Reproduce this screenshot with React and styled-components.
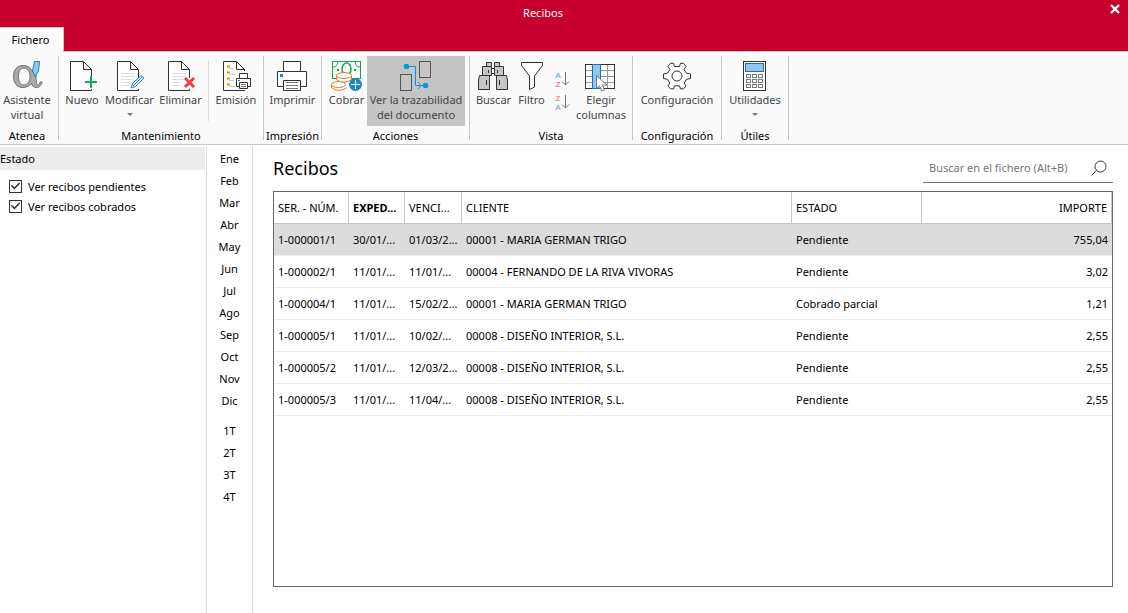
import React, { useState } from 'react'
import styled, { createGlobalStyle } from 'styled-components';

const receipts = [
    { id: '1-000001/1', issued: '30/01/...', due: '01/03/2...', client: '00001 - MARIA GERMAN TRIGO', status: 'Pendiente', amount: '755,04' },
    { id: '1-000002/1', issued: '11/01/...', due: '11/01/...', client: '00004 - FERNANDO DE LA RIVA VIVORAS', status: 'Pendiente', amount: '3,02' },
    { id: '1-000004/1', issued: '11/01/...', due: '15/02/2...', client: '00001 - MARIA GERMAN TRIGO', status: 'Cobrado parcial', amount: '1,21' },
    { id: '1-000005/1', issued: '11/01/...', due: '10/02/...', client: '00008 - DISEÑO INTERIOR, S.L.', status: 'Pendiente', amount: '2,55' },
    { id: '1-000005/2', issued: '11/01/...', due: '12/03/2...', client: '00008 - DISEÑO INTERIOR, S.L.', status: 'Pendiente', amount: '2,55' },
    { id: '1-000005/3', issued: '11/01/...', due: '11/04/...', client: '00008 - DISEÑO INTERIOR, S.L.', status: 'Pendiente', amount: '2,55' },
]

const months = ['Ene', 'Feb', 'Mar', 'Abr', 'May', 'Jun', 'Jul', 'Ago', 'Sep', 'Oct', 'Nov', 'Dic']
const quarters = ['1T', '2T', '3T', '4T']

function Sheet({ lines, children }) {
    return (
        <Icon viewBox="0 0 32 32">
            <path d="M26 18V10L17.5 1.5H4.5V30.5H25.5V28" fill="#fff" stroke="none" />
            <path d="M25.5 18V9.5L17.5 1.5H4.5V30.5H25.5V29M17.5 1.5V9.5H25.5" stroke="#333" />
            {lines && <path d="M8 13.5H22M8 16.5H22M8 19.5H20M8 22.5H18M8 25.5H17" stroke="#ddd" />}
            {children}
        </Icon>
    )
}

function AlphaIcon() {
    return (
        <Icon viewBox="0 0 32 32">
            <path
                d="M12 5.5C17 5.5 20 8 21.5 12L23 8L25 15C25 22 26 25 27 25C28.5 25 29 23.5 29 22L31 22C30.5 26 28 27.5 25.5 27.5C22.5 27.5 21 26 20.5 23C18.5 26 15.5 27.5 12 27.5C6 27.5 2.5 23 2.5 16.5C2.5 10 6 5.5 12 5.5ZM13 8C9 8 7.5 11.5 7.5 16.5C7.5 21.5 9 25 13 25C17 25 19 20.5 19 16.5C19 12 17 8 13 8Z"
                fill="#aaa"
                fillRule="evenodd"
                stroke="#6f6f6f"
            />
            <path d="M23.5 1.5H28.5L27.5 11L24 17L21.5 11Z" fill="#8dc8f0" stroke="#2779b5" />
        </Icon>
    )
}

function EmitIcon() {
    return (
        <Icon viewBox="0 0 32 32">
            <path d="M25 30.5H3.5V1.5H16.5L24.5 9.5V11" fill="#fff" stroke="#333" />
            <path d="M16.5 1.5V9.5H24.5" stroke="#333" />
            <path d="M7 6.5H10M7 12.5H10M7 18.5H10M7 24.5H10" stroke="#f39200" strokeWidth="2" />
            <path d="M9 8.5H14M9 14.5H15M9 20.5H14M9 26.5H15" stroke="#ccc" />
            <path d="M19.5 18V13.5H27.5V18" fill="#fff" stroke="#333" />
            <path d="M16.5 18.5H30.5V26.5H16.5Z" fill="#fff" stroke="#333" />
            <path d="M19.5 22.5H27.5V28.5H19.5Z" fill="#fff" stroke="#333" />
            <path d="M21 24.5H26M21 26.5H26" stroke="#777" />
            <path d="M18 20.5H20" stroke="#1e88c8" />
        </Icon>
    )
}

function PrinterIcon() {
    return (
        <Icon viewBox="0 0 32 32">
            <path d="M7.5 11V1.5H24.5V11" fill="#fff" stroke="#333" />
            <path d="M1.5 11.5H30.5V26.5H1.5Z" fill="#fff" stroke="#333" />
            <path d="M7.5 20.5H24.5V30.5H7.5Z" fill="#fff" stroke="#333" />
            <path d="M10 22.5H22M10 25.5H22M10 28.5H22" stroke="#777" />
            <rect x="4" y="14" width="3" height="3" fill="#1e88c8" />
        </Icon>
    )
}

function CashIcon() {
    return (
        <Icon viewBox="-1 0 32 32">
            <rect x="1.5" y="1.5" width="28" height="17" fill="#fff" stroke="#17a34a" />
            <path d="M2 7Q6 7 7 2M24 2Q25 7 29 7" stroke="#17a34a" />
            <ellipse cx="15.5" cy="9" rx="4.5" ry="6" stroke="#17a34a" strokeWidth="1.5" />
            <path d="M6 10H8M23 10H25" stroke="#17a34a" strokeWidth="2" />
            <g fill="#fff" stroke="#e9762b">
                <path d="M5.5 15.5V26Q12.5 32 20.5 26V15.5Z" stroke="none" />
                <path d="M0.5 24V27.5Q7 33 15.5 28" />
                <ellipse cx="7.5" cy="24.5" rx="7" ry="3" />
                <path d="M5.5 15.5V19.5Q12.5 25 20.5 19.5V15.5" />
                <ellipse cx="13" cy="15.5" rx="7.5" ry="3" />
            </g>
            <circle cx="24.5" cy="24.5" r="6.5" fill="#1e88c8" />
            <path d="M24.5 20V29M20 24.5H29" stroke="#fff" />
        </Icon>
    )
}

function TraceIcon() {
    return (
        <Icon viewBox="0 0 32 32">
            <rect x="0.5" y="14.5" width="11" height="16" stroke="#555" />
            <rect x="19.5" y="1.5" width="11" height="16" stroke="#555" />
            <path d="M7 6.5H15.5V25.5H25M18 22L21 25.5L18 29" stroke="#0a96dc" />
            <circle cx="6.5" cy="6.5" r="2.8" fill="#0a96dc" />
            <circle cx="25.5" cy="25.5" r="2.8" fill="#0a96dc" />
        </Icon>
    )
}

function BinocularsIcon() {
    return (
        <Icon viewBox="0 0 32 32">
            <g fill="#c6c6c6" stroke="#333">
                <path d="M9.5 2.5H14.5V6.5H9.5ZM17.5 2.5H22.5V6.5H17.5Z" />
                <path d="M14.5 8.5H17.5V13.5H14.5Z" fill="#fff" />
                <path d="M5.5 6.5H14.5V15.5H5.5ZM17.5 6.5H26.5V15.5H17.5Z" />
                <path d="M2.5 15.5H12.5V29.5H1.5V20ZM19.5 15.5H29.5L30.5 20V29.5H19.5Z" />
            </g>
            <path d="M9.5 20V25M22.5 20V25M11.5 10V13M20.5 10V13" stroke="#333" />
        </Icon>
    )
}

function FilterIcon() {
    return (
        <Icon viewBox="-1 0 32 32">
            <path d="M5.5 2.5H26.5V5.5L18.5 16V27L13.5 29.5V16L5.5 5.5Z" fill="#fff" stroke="#333" />
        </Icon>
    )
}

function SortIcon({ reverse }) {
    return (
        <SmallIcon viewBox="0 0 16 20">
            <text x="4" y="9" fill={reverse ? '#ef5f62' : '#4ba3d8'}>{reverse ? 'Z' : 'A'}</text>
            <text x="4" y="18" fill={reverse ? '#4ba3d8' : '#ef5f62'}>{reverse ? 'A' : 'Z'}</text>
            <path d="M11.5 3V16M8 12.5L11.5 16L15 12.5" stroke="#777" />
        </SmallIcon>
    )
}

function ColumnsIcon() {
    return (
        <Icon viewBox="0 0 32 32">
            <rect x="0.5" y="4.5" width="29" height="24" fill="#fff" stroke="none" />
            <path d="M0 10.5H30M0 16.5H30M0 22.5H30M22.5 4V28" stroke="#999" />
            <rect x="0.5" y="4.5" width="29" height="24" stroke="#333" />
            <rect x="7.5" y="4.5" width="8" height="24" fill="#8ec8ef" stroke="#1e6fb0" />
            <path d="M11.5 15.5V28.5L14.5 26L17 31L19.5 30L17.5 25H22Z" fill="#fff" stroke="#777" />
        </Icon>
    )
}

function GearIcon() {
    return (
        <Icon viewBox="0 0 32 32">
            <path d="M9.2 3.5L12.5 3.2L13.5 6.5H18.5L19.5 3.2L22.8 3.5L25 6.5L23 9.5L25.5 13.2L29.5 14V18.5L25.5 19.3L23.2 23L25 26L22.5 28.8L19.5 29L18.5 25.8H13.5L12.5 29L9.5 28.8L7 26L8.8 23L6.5 19.3L2.5 18.5V14L6.5 13.2L9 9.5L7 6.5Z" fill="#fff" stroke="#333" />
            <circle cx="16" cy="16" r="5" stroke="#333" />
        </Icon>
    )
}

function CalculatorIcon() {
    return (
        <Icon viewBox="0 0 32 32">
            <rect x="4.5" y="1.5" width="22" height="29" fill="#fff" stroke="#333" />
            <rect x="6.5" y="3.5" width="18" height="8" fill="#8ec8ef" stroke="#1e6fb0" />
            {[14.5, 19.5, 24.5].map((y) => [7.5, 13.5, 19.5].map((x) => (
                <rect key={`${x}-${y}`} x={x} y={y} width="4" height="3" stroke="#777" />
            )))}
        </Icon>
    )
}

function Tool({ label, width, icon, active, arrow }) {
    return (
        <ToolButton type="button" $width={width} $active={active}>
            {icon}
            <span>{label}</span>
            {arrow && <Arrow />}
        </ToolButton>
    )
}

function Ribbon() {
    return (
        <RibbonBar>
            <Group $flush>
                <Tools><Tool label="Asistente virtual" width={54} icon={<AlphaIcon />} /></Tools>
                <GroupName>Atenea</GroupName>
            </Group>
            <Group>
                <Tools>
                    <Tool label="Nuevo" width={38} icon={<Sheet><path d="M25 16V28M19 22H31" stroke="#17a852" strokeWidth="2" /></Sheet>} />
                    <Tool label="Modificar" width={57} arrow icon={
                        <Sheet lines>
                            <path d="M18 28L19.5 23.5L28 15.5L31 18L22.5 26.5Z" fill="#e2f2fc" stroke="#2a86c8" />
                            <path d="M20 26L29 17" stroke="#2a86c8" />
                        </Sheet>
                    } />
                    <Tool label="Eliminar" width={45} icon={
                        <Sheet lines><path d="M21 18L30 27M30 18L21 27" stroke="#ef3e3e" strokeWidth="3" /></Sheet>
                    } />
                    <Separator />
                    <Tool label="Emisión" width={46} icon={<EmitIcon />} />
                </Tools>
                <GroupName>Mantenimiento</GroupName>
            </Group>
            <Group>
                <Tools><Tool label="Imprimir" width={49} icon={<PrinterIcon />} /></Tools>
                <GroupName>Impresión</GroupName>
            </Group>
            <Group>
                <Tools>
                    <Tool label="Cobrar" width={41} icon={<CashIcon />} />
                    <Tool label="Ver la trazabilidad del documento" width={98} active icon={<TraceIcon />} />
                </Tools>
                <GroupName>Acciones</GroupName>
            </Group>
            <Group>
                <Tools>
                    <Tool label="Buscar" width={39} icon={<BinocularsIcon />} />
                    <Tool label="Filtro" width={37} icon={<FilterIcon />} />
                    <SortTools>
                        <SortButton type="button" aria-label="Orden ascendente"><SortIcon /></SortButton>
                        <SortButton type="button" aria-label="Orden descendente"><SortIcon reverse /></SortButton>
                    </SortTools>
                    <Tool label="Elegir columnas" width={54} icon={<ColumnsIcon />} />
                </Tools>
                <GroupName>Vista</GroupName>
            </Group>
            <Group>
                <Tools><Tool label="Configuración" width={80} icon={<GearIcon />} /></Tools>
                <GroupName>Configuración</GroupName>
            </Group>
            <Group>
                <Tools><Tool label="Utilidades" width={58} arrow icon={<CalculatorIcon />} /></Tools>
                <GroupName>Útiles</GroupName>
            </Group>
        </RibbonBar>
    )
}

function App() {
    const [pending, setPending] = useState(true)
    const [paid, setPaid] = useState(true)

    return (
        <Window>
            <GlobalStyle />
            <Header>
                <TitleBar>
                    <Title>Recibos</Title>
                    <CloseButton type="button" aria-label="Cerrar">
                        <svg width="10" height="10" viewBox="0 0 10 10">
                            <path d="M1 1L9 9M9 1L1 9" stroke="#fff" strokeWidth="2.4" />
                        </svg>
                    </CloseButton>
                </TitleBar>
                <Tab type="button">Fichero</Tab>
            </Header>
            <Ribbon />
            <Body>
                <Filters>
                    <FiltersTitle>Estado</FiltersTitle>
                    <Check>
                        <input type="checkbox" checked={pending} onChange={() => setPending(!pending)} />
                        Ver recibos pendientes
                    </Check>
                    <Check>
                        <input type="checkbox" checked={paid} onChange={() => setPaid(!paid)} />
                        Ver recibos cobrados
                    </Check>
                </Filters>
                <Periods>
                    <PeriodList>
                        {months.map((m) => <Period type="button" key={m}>{m}</Period>)}
                    </PeriodList>
                    <PeriodList>
                        {quarters.map((q) => <Period type="button" key={q}>{q}</Period>)}
                    </PeriodList>
                </Periods>
                <Main>
                    <MainTop>
                        <Heading>Recibos</Heading>
                        <Search>
                            <input type="text" aria-label="Buscar en el fichero" placeholder="Buscar en el fichero (Alt+B)" />
                            <svg width="16" height="16" viewBox="0 0 16 16" fill="none" stroke="#333">
                                <circle cx="9.5" cy="6.5" r="5.5" />
                                <path d="M5.5 10.5L0.5 15.5" />
                            </svg>
                        </Search>
                    </MainTop>
                    <Grid>
                        <Table>
                            <colgroup>
                                <Col $width={75} />
                                <Col $width={56} />
                                <Col $width={57} />
                                <col />
                                <Col $width={130} />
                                <Col $width={190} />
                            </colgroup>
                            <thead>
                                <tr>
                                    <Th>SER. - NÚM.</Th>
                                    <Th $bold>EXPED...</Th>
                                    <Th>VENCI...</Th>
                                    <Th>CLIENTE</Th>
                                    <Th>ESTADO</Th>
                                    <Th $right>IMPORTE</Th>
                                </tr>
                            </thead>
                            <tbody>
                                {receipts.map((r, i) => (
                                    <Row key={r.id} $selected={i === 0}>
                                        <Td>{r.id}</Td>
                                        <Td>{r.issued}</Td>
                                        <Td>{r.due}</Td>
                                        <Td>{r.client}</Td>
                                        <Td>{r.status}</Td>
                                        <Td $right>{r.amount}</Td>
                                    </Row>
                                ))}
                            </tbody>
                        </Table>
                    </Grid>
                </Main>
            </Body>
        </Window>
    )
}

export default App

const GlobalStyle = createGlobalStyle`
    *{
        box-sizing:border-box;
    }
    body{
        margin:0;
        background:white;
    }
    body, button, input{
        font-family:"Noto Sans", "Open Sans", sans-serif;
        font-size:11px;
    }
    button{
        border:none;
        padding:0;
        background:none;
        color:inherit;
    }
`
const Window = styled.div`
    min-height:100vh;
    display:flex;
    flex-direction:column;
    color:black;
`
const Header = styled.header`
    background:#c8002d;
    border-bottom:1px solid #c6c6c6;
`
const TitleBar = styled.div`
    display:flex;
    height:27px;
`
const Title = styled.div`
    flex:1;
    text-align:center;
    color:white;
    line-height:26px;
`
const CloseButton = styled.button`
    width:42px;
    height:18px;
    padding-left:16px;
    display:flex;
    align-items:center;
    justify-content:center;
`
const Tab = styled.button`
    display:block;
    width:64px;
    height:25px;
    margin-bottom:-1px;
    padding:0 2px 2px 0;
    background:#fafafa;
    border-top:1px solid #c6c6c6;
    border-right:1px solid #c6c6c6;
`
const RibbonBar = styled.div`
    display:flex;
    height:93px;
    padding:4px 0;
    background:#fafafa;
    border-bottom:1px solid #c6c6c6;
`
const Group = styled.div`
    display:flex;
    flex-direction:column;
    justify-content:space-between;
    padding:0 4px;
    padding-left:${({ $flush }) => ($flush ? '0' : '4px')};
    border-right:1px solid #c6c6c6;
`
const Tools = styled.div`
    display:flex;
    height:70px;
`
const GroupName = styled.div`
    line-height:8px;
    text-align:center;
    white-space:nowrap;
    margin:0 -4px;
`
const ToolButton = styled.button`
    width:${({ $width }) => $width}px;
    display:flex;
    flex-direction:column;
    align-items:center;
    padding-top:4px;
    line-height:15px;
    color:#444;
    background:${({ $active }) => ($active ? '#c5c5c5' : 'transparent')};
`
const Icon = styled.svg`
    width:32px;
    height:32px;
    margin-right:1px;
    flex:none;
    fill:none;
`
const SmallIcon = styled.svg`
    width:16px;
    height:20px;
    fill:none;
    text{
        font-family:"Liberation Sans", Arial, sans-serif;
        font-size:8px;
        text-anchor:middle;
    }
`
const Arrow = styled.i`
    margin-top:6px;
    border:3px solid transparent;
    border-top-color:#777;
    border-bottom:none;
`
const Separator = styled.div`
    width:1px;
    height:60px;
    margin:5px 4px 0 5px;
    background:#dcdcdc;
`
const SortTools = styled.div`
    width:24px;
    display:flex;
    flex-direction:column;
    align-items:center;
    gap:3px;
    padding-top:13px;
`
const SortButton = styled.button`
    display:flex;
`
const Body = styled.div`
    flex:1;
    display:flex;
    padding-top:2px;
`
const Filters = styled.aside`
    width:207px;
    border-right:1px solid #dcdcdc;
`
const FiltersTitle = styled.div`
    margin:0 1px 6px 0;
    line-height:23px;
    background:#ededed;
`
const Check = styled.label`
    display:flex;
    align-items:center;
    gap:6px;
    height:20px;
    padding-left:9px;
    input{
        appearance:none;
        width:13px;
        height:13px;
        margin:0;
        border:1px solid #333;
        background:white;
    }
    input:checked::after{
        content:'';
        display:block;
        width:11px;
        height:11px;
        background:#333;
        clip-path:polygon(8% 48%, 17% 39%, 40% 62%, 84% 18%, 93% 27%, 40% 81%);
    }
`
const Periods = styled.nav`
    width:46px;
    display:flex;
    flex-direction:column;
    gap:8px;
    border-right:1px solid #dcdcdc;
`
const PeriodList = styled.div`
    display:flex;
    flex-direction:column;
`
const Period = styled.button`
    height:22px;
`
const Main = styled.main`
    flex:1;
    min-width:0;
    display:flex;
    flex-direction:column;
    padding:6px 15px 26px 20px;
`
const MainTop = styled.div`
    display:flex;
    justify-content:space-between;
    margin-bottom:8px;
`
const Heading = styled.h1`
    margin:0;
    font-size:18px;
    font-weight:400;
    line-height:30px;
`
const Search = styled.label`
    width:190px;
    height:30px;
    display:flex;
    align-items:center;
    justify-content:space-between;
    padding:0 6px;
    border-bottom:1px solid #777;
    input{
        width:150px;
        padding:0;
        border:none;
        outline:none;
        background:none;
    }
    input::placeholder{
        color:#777;
        opacity:1;
    }
`
const Grid = styled.div`
    flex:1;
    border:1px solid #666;
`
const Table = styled.table`
    width:100%;
    table-layout:fixed;
    border-collapse:separate;
    border-spacing:0;
`
const Col = styled.col`
    width:${({ $width }) => $width}px;
`
const Th = styled.th`
    height:32px;
    padding:0 4px;
    text-align:${({ $right }) => ($right ? 'right' : 'left')};
    font-weight:${({ $bold }) => ($bold ? '700' : '400')};
    white-space:nowrap;
    border-right:1px solid #c6c6c6;
    border-bottom:1px solid #c6c6c6;
`
const Td = styled.td`
    height:32px;
    padding:0 4px;
    text-align:${({ $right }) => ($right ? 'right' : 'left')};
    white-space:nowrap;
    border-bottom:1px solid #ececec;
`
const Row = styled.tr`
    background:${({ $selected }) => ($selected ? '#dcdcdc' : 'white')};
`
